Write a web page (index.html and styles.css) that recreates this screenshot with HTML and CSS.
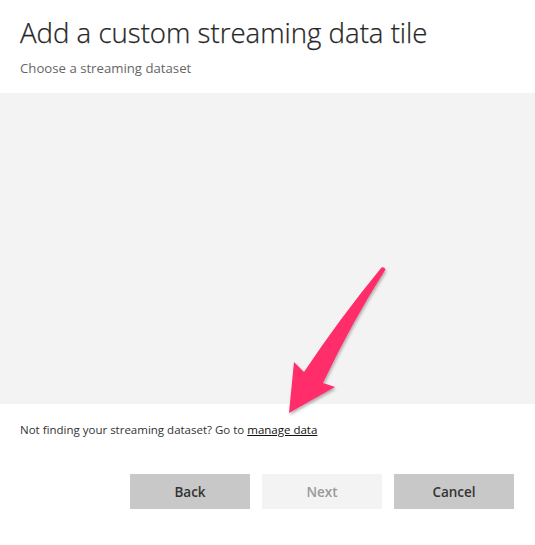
FILE: index.html
```html
<!DOCTYPE html>
<html>
<head>
<meta charset="utf-8">
<link rel="stylesheet" href="styles.css">
</head>
<body>
<div class="dialog">
  <header class="head">
    <h1 class="title">Add a custom streaming data tile</h1>
    <p class="subtitle">Choose a streaming dataset</p>
  </header>
  <div class="panel"></div>
  <p class="hint">Not finding your streaming dataset? Go to <a class="link" href="#">manage data</a></p>
  <div class="actions">
    <button class="btn">Back</button>
    <button class="btn btn-disabled">Next</button>
    <button class="btn">Cancel</button>
  </div>
  <svg class="arrow" width="535" height="545" viewBox="0 0 535 545">
    <defs>
      <filter id="sh" x="-20%" y="-20%" width="140%" height="140%">
        <feDropShadow dx="1" dy="2" stdDeviation="1.5" flood-color="#000" flood-opacity="0.3"/>
      </filter>
    </defs>
    <path filter="url(#sh)" fill="#ff2d6b" d="M381.5,267.5 Q384,266.5 385.5,269.5 Q352,322 323,383 L335,387 L289,413 L294,362 L304,372 Q340,318 381.5,267.5 Z"/>
  </svg>
</div>
</body>
</html>
```
FILE: styles.css
```css
html, body { margin: 0; padding: 0; background: #fff; }
body { font-family: "Open Sans", "Noto Sans", sans-serif; }
.dialog { position: relative; width: 535px; height: 545px; overflow: hidden; }
.head { padding: 14px 20px 0; height: 79px; box-sizing: border-box; }
.title { margin: 0; font-weight: 300; font-size: 27.6px; line-height: 36px; color: #262626; letter-spacing: 0; -webkit-text-stroke: 0.25px #262626; }
.subtitle { margin: 9px 0 0; font-size: 13.2px; line-height: 18px; color: #666; }
.panel { margin-top: 14px; height: 311px; background: #f3f3f3; }
.hint { margin: 18px 20px 0; font-size: 11.5px; line-height: 16px; color: #333; }
.link { color: #111; text-decoration: underline; }
.actions { display: flex; justify-content: flex-end; gap: 12px; padding: 0 21px; margin-top: 36px; }
.btn { width: 120px; height: 35px; border: 0; background: #c8c8c8; color: #333; font-family: "Open Sans", sans-serif; font-weight: 600; font-size: 13.5px; padding: 0; }
.btn-disabled { background: #f3f3f3; color: #999; }
.arrow { position: absolute; left: 0; top: 0; pointer-events: none; }
```
